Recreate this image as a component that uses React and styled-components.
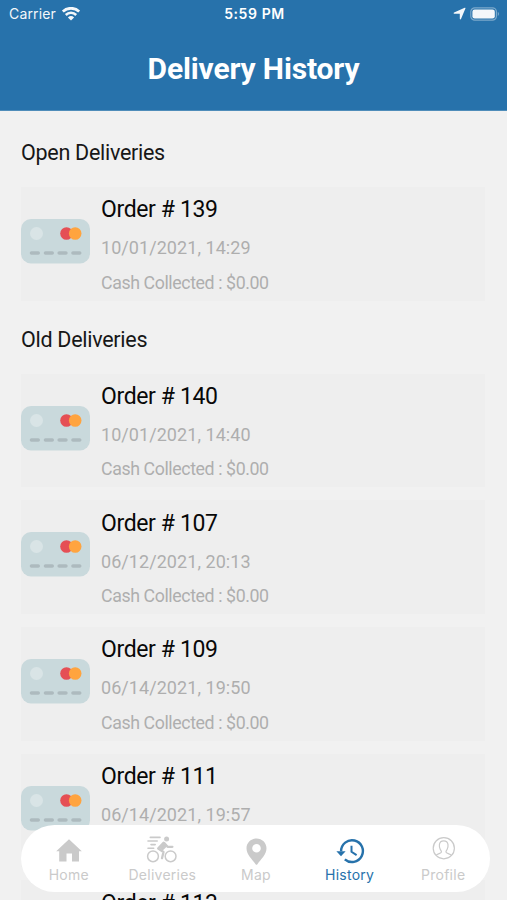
import React from 'react';
import styled, { createGlobalStyle } from 'styled-components';

const GlobalStyle = createGlobalStyle`
   * {
      box-sizing: border-box;
   }

   body {
      margin: 0;
      overflow: hidden;
      background-color: #F1F1F1;
   }
`

const Screen = styled.div`
   position: relative;
   height: 100vh;
   overflow: hidden;
   background-color: #F1F1F1;
   font-family: Roboto, sans-serif;
`

const Header = styled.header`
   height: 111px;
   background-color: #2772AB;
   border-bottom: 1px solid #4F8DBA;
   color: #FFF;
`

const StatusBar = styled.div`
   display: grid;
   grid-template-columns: 1fr auto 1fr;
   align-items: center;
   height: 27px;
   padding: 0 7px 0 9px;
   font-family: Inter, sans-serif;
   font-size: 14px;
`

const StatusGroup = styled.div`
   display: flex;
   align-items: center;
   justify-content: ${({ $end }) => ($end ? 'flex-end' : 'flex-start')};
   gap: ${({ $end }) => ($end ? '4px' : '6px')};
   letter-spacing: 0.15px;
   opacity: 0.95;
`

const Clock = styled.span`
   font-size: 14px;
   font-weight: 600;
   letter-spacing: 0.6px;
`

const Title = styled.h1`
   margin: 0;
   padding-top: 22px;
   font-size: 30px;
   line-height: 40px;
   font-weight: 700;
   text-align: center;
   letter-spacing: -0.15px;
`

const Content = styled.main`
   padding: 0 22px 0 21px;
`

const SectionTitle = styled.h2`
   margin: 0;
   padding-top: ${({ $first }) => ($first ? '27px' : '11.5px')};
   height: ${({ $first }) => ($first ? '76px' : '60px')};
   font-size: 21.5px;
   line-height: 30px;
   font-weight: 400;
   letter-spacing: -0.28px;
   color: #171717;
`

const Card = styled.article`
   display: flex;
   align-items: center;
   gap: 11px;
   height: 113.7px;
   margin-bottom: 13px;
   background-color: #EEE;
`

const CardIcon = styled.svg`
   flex: none;
   margin-top: -5px;
`

const OrderName = styled.div`
   height: 38px;
   font-size: 23px;
   line-height: 32px;
   letter-spacing: -0.38px;
   color: #080808;
`

const OrderInfo = styled.div`
   height: 34.5px;
   font-size: ${({ $date }) => ($date ? '18px' : '17.75px')};
   line-height: 32px;
   letter-spacing: ${({ $date }) => ($date ? '0.06px' : '-0.4px')};
   color: #AEAEAE;
`

const Details = styled.div`
   height: 100%;
   padding-top: 7.3px;
`

const TabBar = styled.nav`
   position: absolute;
   left: 21px;
   right: 17px;
   bottom: 8px;
   height: 67px;
   display: grid;
   grid-template-columns: repeat(5, 1fr);
   padding-left: 1px;
   border-radius: 34px;
   background-color: #FFF;
`

const Tab = styled.div`
   display: flex;
   flex-direction: column;
   align-items: center;
   padding-top: 9px;
   font-family: Inter, sans-serif;
   font-size: 14px;
   line-height: 18px;
   font-weight: 400;
   letter-spacing: 0.25px;
   color: ${({ $active }) => ($active ? '#2772AB' : '#CACACA')};

   svg {
      flex: none;
   }
`

function CreditCard() {
   return (
      <CardIcon width="69" height="45" viewBox="0 0 69 45">
         <rect width="69" height="44.5" rx="10" fill="#C9D9DC" />
         <circle cx="15.5" cy="14.5" r="6.5" fill="#D9E4E6" />
         <circle cx="45.5" cy="14.5" r="6.3" fill="#E54F55" />
         <circle cx="54.2" cy="14.5" r="6.3" fill="#FFA43F" />
         <path d="M10.5 34h6.7M24.5 34h6.7M38.2 34h6.7M52 34h6.7" stroke="#ADBABE" strokeWidth="3.6" strokeLinecap="round" />
      </CardIcon>
   )
}

function WifiIcon() {
   return (
      <svg width="18" height="14" viewBox="0 0 18 14" fill="none" stroke="currentColor">
         <path d="M.8 4.6a11.8 11.8 0 0 1 16.400 0" strokeWidth="2.800" />
         <path d="M3.800 8a7.300 7.300 0 0 1 10.400 0" strokeWidth="2.500" />
         <path d="M9 13.6 5.9 10.4a4.5 4.5 0 0 1 6.2 0z" fill="currentColor" stroke="none" />
      </svg>
   )
}

function LocationArrow() {
   return (
      <svg width="13" height="13" viewBox="0 0 13 13" fill="currentColor">
         <path d="M11.700.7c.6-.2 1 .2.700.8L8 12c-.3.700-1.200.6-1.200-.2V6.700H1.400C.5 6.700.4 5.700 1.100 5.400z" />
      </svg>
   )
}

function Battery() {
   return (
      <svg width="30" height="14" viewBox="0 0 30 14">
         <rect x=".8" y=".8" width="25.6" height="12.4" rx="4" fill="none" stroke="#FFF" strokeOpacity=".42" strokeWidth="1.2" />
         <rect x="2.4" y="2.4" width="22.4" height="9.2" rx="2.3" fill="#FFF" />
         <path d="M27.8 4.8q2 2.2 0 4.4z" fill="#FFF" opacity=".5" />
      </svg>
   )
}

function HomeIcon() {
   return (
      <svg width="32" height="32" viewBox="0 0 32 32" fill="currentColor">
         <path d="M16 5.2 28.8 17.200H26v10.400H19V19.500h-5.500v8.100H6.200V17.200H3.200z" />
      </svg>
   )
}

function DeliveriesIcon() {
   return (
      <svg width="32" height="32" viewBox="0 0 32 32" fill="none" stroke="currentColor" strokeLinecap="round" strokeLinejoin="round">
         <circle cx="7" cy="22.3" r="5.4" strokeWidth="1.5" />
         <circle cx="24.6" cy="22.3" r="5.4" strokeWidth="1.5" />
         <circle cx="20.6" cy="4.9" r="2.5" fill="currentColor" stroke="none" />
         <path d="m17.500 8.700-5.300 5.800 5.300 3.500-1.500 6.200M18.200 8.900l3.400 3.900h4.800" strokeWidth="2.300" />
         <path d="m12.500 14.300 5.300-4.800 2.200 2.500-3.700 3.500" strokeWidth="2" fill="currentColor" />
         <path d="M4.300 3.400h9.700M2 7h9.200M5 10.600h4.200M2 14.200h5.700" strokeWidth="1.6" />
      </svg>
   )
}

function MapIcon() {
   return (
      <svg width="32" height="32" viewBox="0 0 32 32" fill="currentColor">
         <path fillRule="evenodd" d="M16.5 4.6c-5.6 0-10 4.3-10 9.7 0 6.3 5.500 10.800 9.100 16 .5.7 1.300.7 1.800 0 3.600-5.200 9.100-9.700 9.100-16 0-5.400-4.400-9.700-10-9.700zm0 5.400a4.300 4.300 0 1 1 0 8.600 4.300 4.300 0 0 1 0-8.600z" />
      </svg>
   )
}

function HistoryIcon() {
   return (
      <svg width="32" height="32" viewBox="0 0 32 32" fill="none" stroke="currentColor">
         <path d="M7.1 17.200a10.900 10.900 0 1 1 3.700 8.100" strokeWidth="2.400" />
         <path d="M2.400 17.200h9.200l-4.600 5z" fill="currentColor" stroke="none" />
         <path d="M17.500 11.800v6l5.100 3.300" strokeWidth="2" />
      </svg>
   )
}

function ProfileIcon() {
   return (
      <svg width="32" height="32" viewBox="0 0 32 32" fill="none" stroke="currentColor" strokeWidth="1.2">
         <circle cx="16.8" cy="14.2" r="10.6" />
         <path d="M9 21.400c1.500-2.100 4.900-1.600 5.400-3.300.3-1.100-.6-1.600-1.200-2.900-.7-1.500-1-3-.8-4.600.3-2.300 1.900-3.700 4.300-3.700s4 1.400 4.300 3.700c.2 1.600-.1 3.100-.8 4.600-.6 1.300-1.500 1.800-1.200 2.900.5 1.700 3.900 1.200 5.400 3.300" />
      </svg>
   )
}

function Order({ id, date }) {
   return (
      <Card>
         <CreditCard />
         <Details>
            <OrderName>Order # {id}</OrderName>
            <OrderInfo $date>{date}</OrderInfo>
            <OrderInfo>Cash Collected : $0.00</OrderInfo>
         </Details>
      </Card>
   )
}

function App() {
   return (
      <Screen>
         <GlobalStyle />
         <Header>
            <StatusBar>
               <StatusGroup>
                  Carrier
                  <WifiIcon />
               </StatusGroup>
               <Clock>5:59 PM</Clock>
               <StatusGroup $end>
                  <LocationArrow />
                  <Battery />
               </StatusGroup>
            </StatusBar>
            <Title>Delivery History</Title>
         </Header>

         <Content>
            <SectionTitle $first>Open Deliveries</SectionTitle>
            <Order id="139" date="10/01/2021, 14:29" />

            <SectionTitle>Old Deliveries</SectionTitle>
            <Order id="140" date="10/01/2021, 14:40" />
            <Order id="107" date="06/12/2021, 20:13" />
            <Order id="109" date="06/14/2021, 19:50" />
            <Order id="111" date="06/14/2021, 19:57" />
            <Order id="113" date="06/14/2021, 20:02" />
         </Content>

         <TabBar>
            <Tab>
               <HomeIcon />
               Home
            </Tab>
            <Tab>
               <DeliveriesIcon />
               Deliveries
            </Tab>
            <Tab>
               <MapIcon />
               Map
            </Tab>
            <Tab $active>
               <HistoryIcon />
               History
            </Tab>
            <Tab>
               <ProfileIcon />
               Profile
            </Tab>
         </TabBar>
      </Screen>
   )
}

export default App
